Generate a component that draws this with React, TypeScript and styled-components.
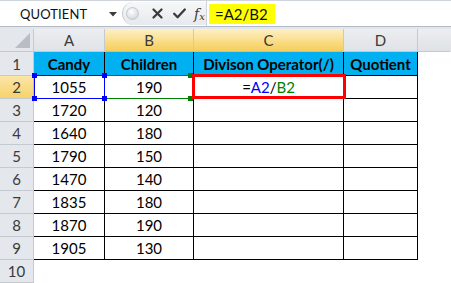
import styled, { createGlobalStyle } from "styled-components";

const GlobalStyle = createGlobalStyle`
  html, body {
    margin: 0;
    padding: 0;
    background: #ffffff;
  }
  body {
    font-family: "Lato", "Noto Sans", sans-serif;
  }
`;

type RefColor = "blue" | "green";
type Corner = "tl" | "tr" | "bl" | "br";

const rows = [
  { candy: "1055", children: "190" },
  { candy: "1720", children: "120" },
  { candy: "1640", children: "180" },
  { candy: "1790", children: "150" },
  { candy: "1470", children: "140" },
  { candy: "1835", children: "180" },
  { candy: "1870", children: "190" },
  { candy: "1905", children: "130" },
];

const columns = ["A", "B", "C", "D", ""];
const activeColumns = ["B", "C"];

const App = () => {
  return (
    <Page>
      <GlobalStyle />
      <FormulaBar>
        <NameBox>
          <NameText>QUOTIENT</NameText>
          <svg width="8" height="5" viewBox="0 0 8 5">
            <path d="M0 0 L8 0 L4 4.5 Z" fill="#3c3c3c" />
          </svg>
        </NameBox>
        <ButtonStrip>
          <Grip />
          <svg width="11" height="11" viewBox="0 0 11 11">
            <path
              d="M1.5 1.5 L9.5 9.5 M9.5 1.5 L1.5 9.5"
              stroke="#3a3a3a"
              strokeWidth="2.2"
              strokeLinecap="round"
            />
          </svg>
          <svg width="13" height="11" viewBox="0 0 13 11">
            <path
              d="M1.2 5.8 L4.6 9.2 L11.8 1.5"
              stroke="#3a3a3a"
              strokeWidth="2.3"
              fill="none"
              strokeLinecap="round"
              strokeLinejoin="round"
            />
          </svg>
          <Fx>
            f<sub>x</sub>
          </Fx>
        </ButtonStrip>
        <FormulaInput>
          <Highlight>=A2/B2</Highlight>
        </FormulaInput>
      </FormulaBar>
      <Gap />
      <Sheet>
        <CornerCell>
          <svg width="17" height="16" viewBox="0 0 17 16">
            <path d="M16 0 L16 15 L1 15 Z" fill="#b9bec5" />
          </svg>
        </CornerCell>
        {columns.map((c, i) => (
          <ColHead key={i} $active={activeColumns.includes(c)} $last={c === ""}>
            {c}
          </ColHead>
        ))}

        <RowHead $active={false}>1</RowHead>
        <TitleCell>Candy</TitleCell>
        <TitleCell>Children</TitleCell>
        <TitleCell>Divison Operator(/)</TitleCell>
        <TitleCell>Quotient</TitleCell>
        <Blank />

        {rows.map((r, i) => {
          const n = i + 2;
          const first = n === 2;
          return [
            <RowHead key={`h${n}`} $active={first}>
              {n}
            </RowHead>,
            <DataCell key={`a${n}`}>
              {r.candy}
              {first && (
                <>
                  <RefBox $color="blue" $sides="all" />
                  {(["tl", "tr", "bl", "br"] as Corner[]).map((c) => (
                    <Handle key={c} $color="blue" $corner={c} $inset={false} />
                  ))}
                </>
              )}
            </DataCell>,
            <DataCell key={`b${n}`}>
              {r.children}
              {first && (
                <>
                  <RefBox $color="green" $sides="tb" />
                  <Handle $color="green" $corner="tr" $inset />
                  <Handle $color="green" $corner="br" $inset />
                </>
              )}
            </DataCell>,
            <DataCell key={`c${n}`}>
              {first && (
                <>
                  <Formula>
                    =<Ref $color="blue">A2</Ref>/<Ref $color="green">B2</Ref>
                  </Formula>
                  <ActiveBox />
                </>
              )}
            </DataCell>,
            <DataCell key={`d${n}`} />,
            <Blank key={`e${n}`} />,
          ];
        })}

        <RowHead $active={false}>10</RowHead>
        <Blank />
        <Blank />
        <Blank />
        <Blank />
        <Blank />
      </Sheet>
    </Page>
  );
};

export default App;

const Page = styled.div`
  width: 451px;
  height: 283px;
  overflow: hidden;
  background: #ffffff;
`;

const FormulaBar = styled.div`
  display: flex;
  align-items: stretch;
  height: 25px;
  border-top: 1px solid #cfd4da;
  border-bottom: 1px solid #b3bac3;
  background: #ffffff;
`;

const NameBox = styled.div`
  width: 122px;
  display: flex;
  align-items: center;
  justify-content: space-between;
  padding: 0 5px 0 20px;
  box-sizing: border-box;
  svg {
    margin-top: 2px;
  }
`;

const NameText = styled.span`
  font-family: "Lato", sans-serif;
  font-size: 13px;
  color: #111111;
  letter-spacing: 0.1px;
`;

const ButtonStrip = styled.div`
  width: 84px;
  display: flex;
  align-items: center;
  gap: 10px;
  padding-left: 3px;
  box-sizing: border-box;
  background: linear-gradient(#f6f7f9, #e6e9ed);
  border-left: 1px solid #c4c9d0;
  border-radius: 12px 0 0 12px;
  margin: 1px 0;
`;

const Grip = styled.span`
  width: 11px;
  height: 11px;
  border-radius: 50%;
  background: radial-gradient(circle at 40% 35%, #ffffff, #c7ccd3);
  border: 1px solid #c2c7ce;
  margin-right: 3px;
`;

const Fx = styled.span`
  font-family: "DejaVu Serif", "Liberation Serif", serif;
  font-style: italic;
  font-size: 14px;
  color: #3a3a3a;
  margin-left: -2px;
  sub {
    font-size: 10px;
    vertical-align: -1px;
  }
`;

const FormulaInput = styled.div`
  flex: 1;
  display: flex;
  align-items: center;
  padding-left: 2px;
  border-left: 1px solid #d0d4da;
`;

const Highlight = styled.span`
  display: flex;
  align-items: center;
  height: 20px;
  width: 66px;
  padding-left: 6px;
  box-sizing: border-box;
  background: #ffff00;
  font-size: 15px;
  color: #111111;
`;

const Gap = styled.div`
  height: 2px;
  background: #e3e6ea;
`;

const Sheet = styled.div`
  display: grid;
  grid-template-columns: 34px 71px 89px 150px 74px 1fr;
  grid-template-rows: 23px 24px repeat(9, 23px);
  font-size: 15px;
`;

const CornerCell = styled.div`
  background: #e4e7eb;
  border-right: 1px solid #c5cad1;
  border-bottom: 1px solid #c5cad1;
  display: flex;
  align-items: flex-end;
  justify-content: flex-end;
  padding: 0 2px 2px 0;
`;

const ColHead = styled.div<{ $active: boolean; $last: boolean }>`
  display: flex;
  align-items: center;
  justify-content: center;
  color: #3a3a3a;
  background: ${(p) =>
    p.$active
      ? "linear-gradient(#fdf0c6, #f8d877 70%, #f6cd5f)"
      : "linear-gradient(#eceef1, #dfe2e6)"};
  border-right: 1px solid ${(p) => (p.$last ? "transparent" : "#c5cad1")};
  border-bottom: 1px solid ${(p) => (p.$active ? "#f2b84b" : "#c5cad1")};
`;

const RowHead = styled.div<{ $active: boolean }>`
  display: flex;
  align-items: center;
  justify-content: center;
  color: #3a3a3a;
  background: ${(p) =>
    p.$active ? "linear-gradient(#fbe6a8, #f7d26c)" : "#e4e7eb"};
  border-right: 1px solid ${(p) => (p.$active ? "#f2b84b" : "#c5cad1")};
  border-bottom: 1px solid #c5cad1;
`;

const TitleCell = styled.div`
  display: flex;
  align-items: center;
  justify-content: center;
  background: #00b0f0;
  font-weight: 700;
  color: #000000;
  border-right: 1px solid #000000;
  border-bottom: 1px solid #000000;
  white-space: nowrap;
`;

const DataCell = styled.div`
  position: relative;
  display: flex;
  align-items: center;
  justify-content: center;
  color: #000000;
  border-right: 1px solid #000000;
  border-bottom: 1px solid #000000;
`;

const Blank = styled.div``;

const Formula = styled.span`
  color: #000000;
`;

const refColors: Record<RefColor, string> = {
  blue: "#0000ff",
  green: "#008000",
};

const Ref = styled.span<{ $color: RefColor }>`
  color: ${(p) => refColors[p.$color]};
`;

const RefBox = styled.span<{ $color: RefColor; $sides: "all" | "tb" }>`
  position: absolute;
  top: -1px;
  bottom: -1px;
  left: ${(p) => (p.$sides === "all" ? "0" : "-1px")};
  right: -1px;
  border-top: 1px solid ${(p) => refColors[p.$color]};
  border-bottom: 1px solid ${(p) => refColors[p.$color]};
  border-left: ${(p) =>
    p.$sides === "all" ? `1px solid ${refColors[p.$color]}` : "none"};
  border-right: ${(p) =>
    p.$sides === "all" ? `1px solid ${refColors[p.$color]}` : "none"};
  pointer-events: none;
`;

const Handle = styled.span<{ $color: RefColor; $corner: Corner; $inset: boolean }>`
  position: absolute;
  width: 5px;
  height: 5px;
  background: ${(p) => refColors[p.$color]};
  ${(p) => (p.$corner[0] === "t" ? "top: -3px;" : "bottom: -3px;")}
  ${(p) =>
    p.$corner[1] === "l" ? "left: -2px;" : p.$inset ? "right: 0;" : "right: -3px;"}
  z-index: 1;
`;

const ActiveBox = styled.span`
  position: absolute;
  top: -2px;
  left: -2px;
  right: -3px;
  bottom: -1px;
  border: 3px solid #ff0000;
  pointer-events: none;
  z-index: 2;
`;
